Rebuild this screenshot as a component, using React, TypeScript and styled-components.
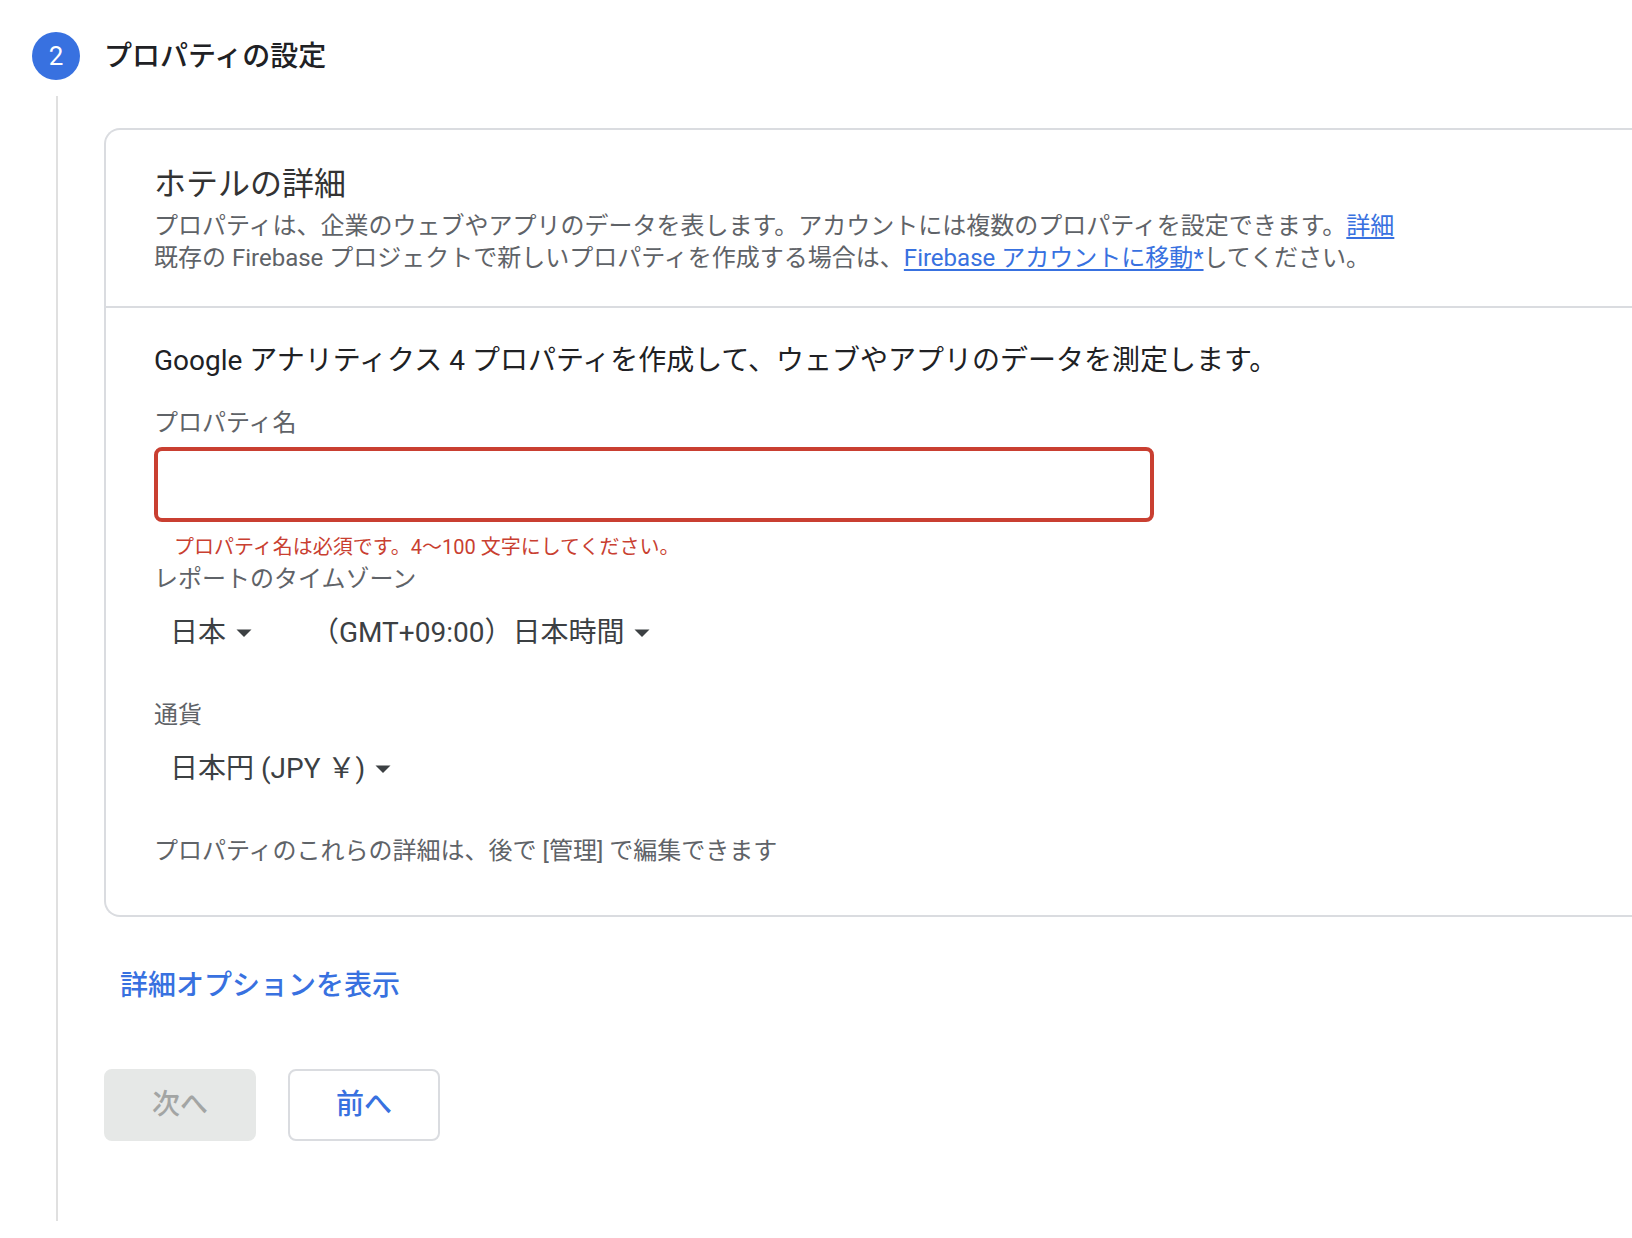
import React from 'react';
import styled, { createGlobalStyle } from 'styled-components';

const color = {
  blue: '#3871e0',
  ink: '#202124',
  text: '#3c4043',
  muted: '#5f6368',
  line: '#dadce0',
  error: '#c93f31',
};

const GlobalStyle = createGlobalStyle`
  *, *::before, *::after { box-sizing: border-box; }
  body {
    margin: 0;
    background: #fff;
    color: ${color.ink};
    font-family: Roboto, 'Noto Sans CJK JP', sans-serif;
    font-size: 24px;
    line-height: 32px;
  }
  h1, h2, h3, p { margin: 0; }
  button, input, select { font: inherit; }
`;

const Step = styled.main`
  display: grid;
  grid-template-columns: 48px minmax(0, 1fr);
  column-gap: 24px;
  padding: 32px 0 16px 32px;
`;

const Rail = styled.div`
  display: flex;
  flex-direction: column;
  gap: 16px;
`;

const StepNumber = styled.span`
  display: flex;
  align-items: center;
  justify-content: center;
  width: 48px;
  height: 48px;
  border-radius: 50%;
  background: ${color.blue};
  color: #fff;
  font-size: 26px;
`;

const RailLine = styled.span`
  flex: 1;
  width: 2px;
  margin-left: 24px;
  background: #e0e0e0;
`;

const StepBody = styled.div`
  display: flex;
  flex-direction: column;
  align-items: flex-start;
  padding-bottom: 80px;
`;

const StepTitle = styled.h1`
  font-size: 28px;
  line-height: 50px;
  font-weight: 500;
  margin-bottom: 46px;
`;

const Card = styled.section`
  align-self: stretch;
  border: 2px solid ${color.line};
  border-right: none;
  border-radius: 16px 0 0 16px;
`;

const CardHeader = styled.header`
  padding: 32px 48px;
  border-bottom: 2px solid ${color.line};
`;

const CardTitle = styled.h2`
  font-size: 32px;
  line-height: 44px;
  font-weight: 400;
  margin-bottom: 4px;
  color: #333;
`;

const Muted = styled.p`
  color: ${color.muted};
`;

const Link = styled.a`
  color: ${color.blue};
  text-decoration: underline;
  text-underline-offset: 3px;
`;

const CardBody = styled.div`
  display: flex;
  flex-direction: column;
  align-items: flex-start;
  padding: 32px 48px 48px;
`;

const Lead = styled.h3`
  font-size: 28px;
  line-height: 42px;
  font-weight: 400;
  margin-bottom: 25px;
`;

const Label = styled.label`
  color: ${color.muted};
`;

const NameInput = styled.input`
  width: 1000px;
  max-width: 100%;
  height: 75px;
  margin-top: 8px;
  padding: 0 16px;
  border: 4px solid ${color.error};
  border-radius: 8px;
  background: #fff;
  outline: none;
`;

const ErrorText = styled.p`
  padding: 9px 20px 0;
  font-size: 20px;
  color: ${color.error};
`;

const SelectRow = styled.div`
  display: flex;
  gap: 59px;
  padding: 18px 16px 0;
  margin-bottom: 46px;
`;

const SelectBox = styled.span`
  display: inline-flex;
  align-items: center;
  gap: 9px;
`;

const Select = styled.select`
  appearance: none;
  border: none;
  background: none;
  padding: 0;
  margin: 0;
  color: ${color.text};
  font-size: 28px;
  line-height: 40px;
  height: 40px;
`;

const Arrow = styled.svg`
  width: 16px;
  height: 8px;
  fill: ${color.text};
  pointer-events: none;
`;

const OptionsButton = styled.button`
  margin: 45px 0 59px;
  padding: 4px 16px;
  border: none;
  background: none;
  color: ${color.blue};
  font-size: 28px;
  line-height: 40px;
  font-weight: 500;
`;

const Actions = styled.div`
  display: flex;
  gap: 32px;
`;

const ActionButton = styled.button<{ $disabled?: boolean }>`
  height: 72px;
  padding: 0 46px;
  border: 2px solid ${(p) => (p.$disabled ? '#e6e8e7' : color.line)};
  border-radius: 8px;
  background: ${(p) => (p.$disabled ? '#e6e8e7' : '#fff')};
  color: ${(p) => (p.$disabled ? '#a3a5a4' : color.blue)};
  font-size: 28px;
  line-height: 40px;
  font-weight: 500;
`;

function Dropdown({ id, label, value }: { id: string; label?: string; value: string }) {
  return (
    <SelectBox>
      <Select id={id} aria-label={label} defaultValue={value}>
        <option value={value}>{value}</option>
      </Select>
      <Arrow viewBox="0 0 16 8" aria-hidden="true">
        <path d="M0.5 0.5h15L8 8z" />
      </Arrow>
    </SelectBox>
  );
}

export default function App() {
  return (
    <>
      <GlobalStyle />
      <Step lang="ja">
        <Rail>
          <StepNumber>2</StepNumber>
          <RailLine />
        </Rail>
        <StepBody>
          <StepTitle>プロパティの設定</StepTitle>
          <Card>
            <CardHeader>
              <CardTitle>ホテルの詳細</CardTitle>
              <Muted>
                プロパティは、企業のウェブやアプリのデータを表します。アカウントには複数のプロパティを設定できます。
                <Link href="#details">詳細</Link>
                <br />
                既存の Firebase プロジェクトで新しいプロパティを作成する場合は、
                <Link href="#firebase">Firebase アカウントに移動*</Link>してください。
              </Muted>
            </CardHeader>
            <CardBody>
              <Lead>Google アナリティクス 4 プロパティを作成して、ウェブやアプリのデータを測定します。</Lead>
              <Label htmlFor="property-name">プロパティ名</Label>
              <NameInput id="property-name" type="text" aria-invalid="true" aria-describedby="property-name-error" />
              <ErrorText id="property-name-error">プロパティ名は必須です。4〜100 文字にしてください。</ErrorText>
              <Label htmlFor="country">レポートのタイムゾーン</Label>
              <SelectRow>
                <Dropdown id="country" value="日本" />
                <Dropdown id="timezone" label="タイムゾーン" value="（GMT+09:00）日本時間" />
              </SelectRow>
              <Label htmlFor="currency">通貨</Label>
              <SelectRow>
                <Dropdown id="currency" value="日本円 (JPY ￥)" />
              </SelectRow>
              <Muted>プロパティのこれらの詳細は、後で [管理] で編集できます</Muted>
            </CardBody>
          </Card>
          <OptionsButton type="button">詳細オプションを表示</OptionsButton>
          <Actions>
            <ActionButton type="button" disabled $disabled>
              次へ
            </ActionButton>
            <ActionButton type="button">前へ</ActionButton>
          </Actions>
        </StepBody>
      </Step>
    </>
  );
}
